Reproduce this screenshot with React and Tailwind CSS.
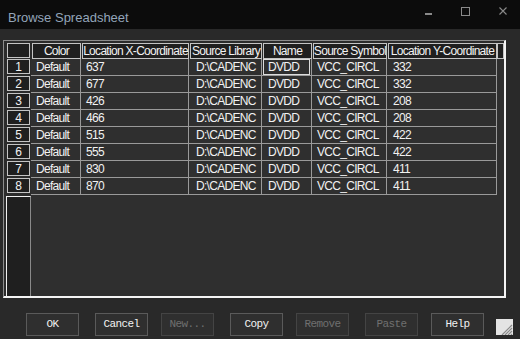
import React from "react";

const cols = [
  { key: "color", label: "Color", w: "w-[50px]", pl: "pl-[5px]" },
  { key: "x", label: "Location X-Coordinate", w: "w-[108px]", pl: "pl-[5px]" },
  { key: "lib", label: "Source Library", w: "w-[73px]", pl: "pl-[7px]" },
  { key: "name", label: "Name", w: "w-[50px]", pl: "pl-[6px]" },
  { key: "sym", label: "Source Symbol", w: "w-[75px]", pl: "pl-[5px]" },
  { key: "y", label: "Location Y-Coordinate", w: "w-[110px]", pl: "pl-[6px]" },
];

const xs = [637, 677, 426, 466, 515, 555, 830, 870];
const ys = [332, 332, 208, 208, 422, 422, 411, 411];
const rows = xs.map((x, i) => ({
  color: "Default",
  x: String(x),
  lib: "D:\\CADENC",
  name: "DVDD",
  sym: "VCC_CIRCL",
  y: String(ys[i]),
}));

const buttons = [
  { label: "OK", disabled: false, ml: "ml-0" },
  { label: "Cancel", disabled: false, ml: "ml-[16px]" },
  { label: "New...", disabled: true, ml: "ml-[13px]" },
  { label: "Copy", disabled: false, ml: "ml-[16px]" },
  { label: "Remove", disabled: true, ml: "ml-[13px]" },
  { label: "Paste", disabled: true, ml: "ml-[16px]" },
  { label: "Help", disabled: false, ml: "ml-[13px]" },
];

export default function App() {
  return (
    <div className="w-[520px] h-[339px] overflow-hidden bg-[#292929] flex flex-col font-['Liberation_Sans',sans-serif] select-none">
      {/* Title bar */}
      <div className="h-[29px] shrink-0 bg-[#0c0c0c] flex items-center relative">
        <span className="ml-[8px] text-[13px] text-[#93a5ba] leading-none mt-[6px]">Browse Spreadsheet</span>
        <div className="ml-auto flex items-start h-full">
          <svg width="10" height="10" viewBox="0 0 10 10" className="mt-[9px] mr-[26px]">
            <rect x="1" y="4" width="7" height="2" fill="#8a8a8a" />
          </svg>
          <svg width="11" height="11" viewBox="0 0 11 11" className="mt-[6px] mr-[27px]">
            <rect x="1.5" y="1.5" width="8" height="8" fill="none" stroke="#8a8a8a" strokeWidth="1" />
          </svg>
          <svg width="10" height="10" viewBox="0 0 10 10" className="mt-[6px] mr-[12px]">
            <path d="M1.5 1.5 L8.5 8.5 M8.5 1.5 L1.5 8.5" stroke="#8a8a8a" strokeWidth="1.1" />
          </svg>
        </div>
      </div>

      {/* Grid frame */}
      <div className="ml-[3px] mt-[11px] w-[503px] h-[258px] shrink-0 border-l border-t border-l-[#8c8c8c] border-t-[#8c8c8c] border-r-2 border-b-2 border-r-[#f4f4f4] border-b-[#f4f4f4] flex text-[12px] tracking-[-0.7px] text-[#f2f2f2]">
        {/* Row header column */}
        <div className="w-[27px] shrink-0 bg-[#2b2b2b] flex flex-col">
          <div className="h-[18px] shrink-0 pt-[2px] pl-[3px]">
            <div className="w-[23px] h-[15px] bg-[#1f1f1f] border border-[#c4c4c4]" />
          </div>
          {rows.map((_, i) => (
            <div key={i} className="h-[17px] shrink-0 pl-[3px]">
              <div className="w-[23px] h-[15px] bg-[#1f1f1f] border border-[#c4c4c4] flex items-center justify-center leading-none tracking-normal">
                {i + 1}
              </div>
            </div>
          ))}
          <div className="flex-1 mt-[1px] ml-[2px] w-[25px] bg-[#1f1f1f] border-l border-t border-l-[#f0f0f0] border-t-[#f0f0f0] border-r border-r-[#8a8a8a]" />
        </div>

        {/* Data area */}
        <div className="flex-1 bg-[#2f2f2f] flex flex-col">
          <div className="h-[18px] shrink-0 flex bg-[#2b2b2b]">
            {cols.map((c) => (
              <div key={c.key} className={`${c.w} shrink-0 pl-[1px] pt-[2px] flex`}>
                <div className="flex-1 h-[16px] bg-[#1f1f1f] border border-[#c4c4c4] flex items-center justify-center leading-none whitespace-nowrap overflow-hidden">
                  {c.label}
                </div>
              </div>
            ))}
            <div className="flex-1 pt-[2px] flex">
              <div className="flex-1 h-[16px] bg-[#1f1f1f] border border-[#c4c4c4]" />
            </div>
          </div>
          {rows.map((r, i) => (
            <div key={i} className="h-[17px] shrink-0 flex">
              {cols.map((c) => (
                <div
                  key={c.key}
                  className={`${c.w} shrink-0 h-[17px] border-r border-b border-[#9a9a9a] flex items-center leading-none whitespace-nowrap overflow-hidden relative`}
                >
                  {i === 0 && c.key === "name" ? (
                    <div className="ml-[1px] w-[47px] h-full border border-[#dcdcdc] flex items-center pl-[4px]">{r[c.key]}</div>
                  ) : (
                    <span className={c.pl}>{r[c.key]}</span>
                  )}
                </div>
              ))}
            </div>
          ))}
        </div>
      </div>

      {/* Buttons */}
      <div className="mt-[15px] pl-[26px] flex items-start">
        {buttons.map((b) => (
          <div
            key={b.label}
            className={`${b.ml} w-[53px] h-[23px] shrink-0 bg-[#2f2f2f] border flex items-center justify-center font-['Liberation_Mono',monospace] text-[11px] tracking-[-0.6px] ${
              b.disabled ? "border-[#444444] text-[#707070]" : "border-[#5a5a5a] text-[#f2f2f2]"
            }`}
          >
            {b.label}
          </div>
        ))}
        <svg width="17" height="16" viewBox="0 0 17 16" className="ml-[12px] mt-[6px]">
          <rect x="0" y="0" width="17" height="16" fill="#e4e4e4" />
          <path d="M16 6 L6 16 M16 9 L9 16 M16 12 L12 16 M16 15 L15 16" stroke="#8a8a8a" strokeWidth="1.2" />
        </svg>
      </div>
    </div>
  );
}
